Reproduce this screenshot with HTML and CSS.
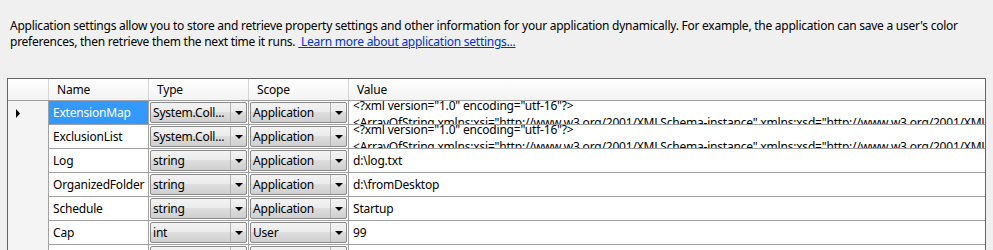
FILE: index.html
```html
<!DOCTYPE html>
<html>
<head>
<meta charset="utf-8">
<link rel="stylesheet" href="styles.css">
</head>
<body>
<div class="page">
  <p class="intro">Application settings allow you to store and retrieve property settings and other information for your application dynamically. For example, the application can save a user's color preferences, then retrieve them the next time it runs. <a class="link" href="#">&nbsp;Learn more about application settings...</a></p>
  <div class="grid">
    <div class="row head">
      <div class="rh"></div>
      <div class="hc">Name</div>
      <div class="hc">Type</div>
      <div class="hc">Scope</div>
      <div class="hc last">Value</div>
    </div>
    <div class="row">
      <div class="rh"><svg class="cur" width="6" height="9" viewBox="0 0 6 9"><path d="M1 0 L5 4.5 L1 9 Z" fill="#000"/></svg></div>
      <div class="c name sel">ExtensionMap</div>
      <div class="c"><div class="combo"><span class="ct">System.Coll...</span><span class="btn"><i class="tri"></i></span></div></div>
      <div class="c"><div class="combo"><span class="ct">Application</span><span class="btn"><i class="tri"></i></span></div></div>
      <div class="c val multi"><div class="lines">&lt;?xml version="1.0" encoding="utf-16"?&gt;
&lt;ArrayOfString xmlns:xsi="http://www.w3.org/2001/XMLSchema-instance" xmlns:xsd="http://www.w3.org/2001/XMLSchema"&gt;</div></div>
    </div>
    <div class="row">
      <div class="rh"></div>
      <div class="c name">ExclusionList</div>
      <div class="c"><div class="combo"><span class="ct">System.Coll...</span><span class="btn"><i class="tri"></i></span></div></div>
      <div class="c"><div class="combo"><span class="ct">Application</span><span class="btn"><i class="tri"></i></span></div></div>
      <div class="c val multi"><div class="lines">&lt;?xml version="1.0" encoding="utf-16"?&gt;
&lt;ArrayOfString xmlns:xsi="http://www.w3.org/2001/XMLSchema-instance" xmlns:xsd="http://www.w3.org/2001/XMLSchema"&gt;</div></div>
    </div>
    <div class="row">
      <div class="rh"></div>
      <div class="c name">Log</div>
      <div class="c"><div class="combo"><span class="ct">string</span><span class="btn"><i class="tri"></i></span></div></div>
      <div class="c"><div class="combo"><span class="ct">Application</span><span class="btn"><i class="tri"></i></span></div></div>
      <div class="c val">d:\log.txt</div>
    </div>
    <div class="row">
      <div class="rh"></div>
      <div class="c name">OrganizedFolder</div>
      <div class="c"><div class="combo"><span class="ct">string</span><span class="btn"><i class="tri"></i></span></div></div>
      <div class="c"><div class="combo"><span class="ct">Application</span><span class="btn"><i class="tri"></i></span></div></div>
      <div class="c val">d:\fromDesktop</div>
    </div>
    <div class="row">
      <div class="rh"></div>
      <div class="c name">Schedule</div>
      <div class="c"><div class="combo"><span class="ct">string</span><span class="btn"><i class="tri"></i></span></div></div>
      <div class="c"><div class="combo"><span class="ct">Application</span><span class="btn"><i class="tri"></i></span></div></div>
      <div class="c val">Startup</div>
    </div>
    <div class="row">
      <div class="rh"></div>
      <div class="c name">Cap</div>
      <div class="c"><div class="combo"><span class="ct">int</span><span class="btn"><i class="tri"></i></span></div></div>
      <div class="c"><div class="combo"><span class="ct">User</span><span class="btn"><i class="tri"></i></span></div></div>
      <div class="c val">99</div>
    </div>
    <div class="row">
      <div class="rh"></div>
      <div class="c name"></div>
      <div class="c"><div class="combo"><span class="ct"></span><span class="btn"><i class="tri"></i></span></div></div>
      <div class="c"><div class="combo"><span class="ct"></span><span class="btn"><i class="tri"></i></span></div></div>
      <div class="c val"></div>
    </div>
  </div>
</div>
</body>
</html>
```

FILE: styles.css
```css
html, body {
  margin: 0;
  padding: 0;
  background: #f0f0f0;
  overflow: hidden;
}
body {
  font-family: "Noto Sans", "Open Sans", sans-serif;
  font-size: 12px;
  color: #000;
}
.page {
  width: 993px;
  height: 250px;
  overflow: hidden;
}
.intro {
  margin: 0;
  padding: 18px 20px 0 10px;
  line-height: 16px;
  letter-spacing: -0.25px;
}
.link {
  color: #0033cc;
  text-decoration: underline;
}
.grid {
  margin: 28px 0 0 7px;
  width: 979px;
  border: 1px solid #646464;
  background: #fff;
  box-sizing: border-box;
}
.row {
  display: grid;
  grid-template-columns: 41px 100px 100px 100px 1fr;
  height: 24px;
}
.row.head {
  height: 22px;
  background: linear-gradient(#ffffff, #f3f3f3);
  border-bottom: 1px solid #a0a0a0;
  box-sizing: border-box;
}
.hc {
  border-right: 1px solid #d5d5d5;
  padding-left: 8px;
  line-height: 21px;
  letter-spacing: -0.2px;
}
.hc.last { border-right: none; }
.head .rh {
  border-right: 1px solid #d5d5d5;
  background: linear-gradient(#ffffff, #f3f3f3);
}
.rh {
  background: #f4f4f4;
  border-right: 1px solid #a0a0a0;
  display: flex;
  align-items: center;
  padding-left: 7px;
}
.c {
  border-right: 1px solid #a0a0a0;
  border-bottom: 1px solid #a0a0a0;
  box-sizing: border-box;
  line-height: 23px;
  white-space: nowrap;
  overflow: hidden;
  letter-spacing: -0.2px;
}
.c.name { padding-left: 4px; }
.c.sel { background: #3399ff; color: #fff; }
.c.val { border-right: none; padding-left: 4px; }
.c.multi { line-height: 17px; }
.lines {
  white-space: pre;
  margin-top: -4px;
}
.combo {
  margin: 1px 1px 0 1px;
  height: 21px;
  border: 1px solid #8a8a8a;
  border-radius: 2px;
  box-sizing: border-box;
  background: linear-gradient(#f3f3f3 0%, #ebebeb 45%, #dddddd 50%, #cfcfcf 100%);
  display: flex;
  align-items: center;
}
.ct {
  flex: 1;
  padding-left: 2px;
  line-height: 19px;
  overflow: hidden;
}
.btn {
  width: 15px;
  height: 19px;
  border-left: 1px solid #b5b5b5;
  display: flex;
  align-items: center;
  justify-content: center;
}
.tri {
  width: 0;
  height: 0;
  border-left: 4px solid transparent;
  border-right: 4px solid transparent;
  border-top: 4px solid #000;
}
```
